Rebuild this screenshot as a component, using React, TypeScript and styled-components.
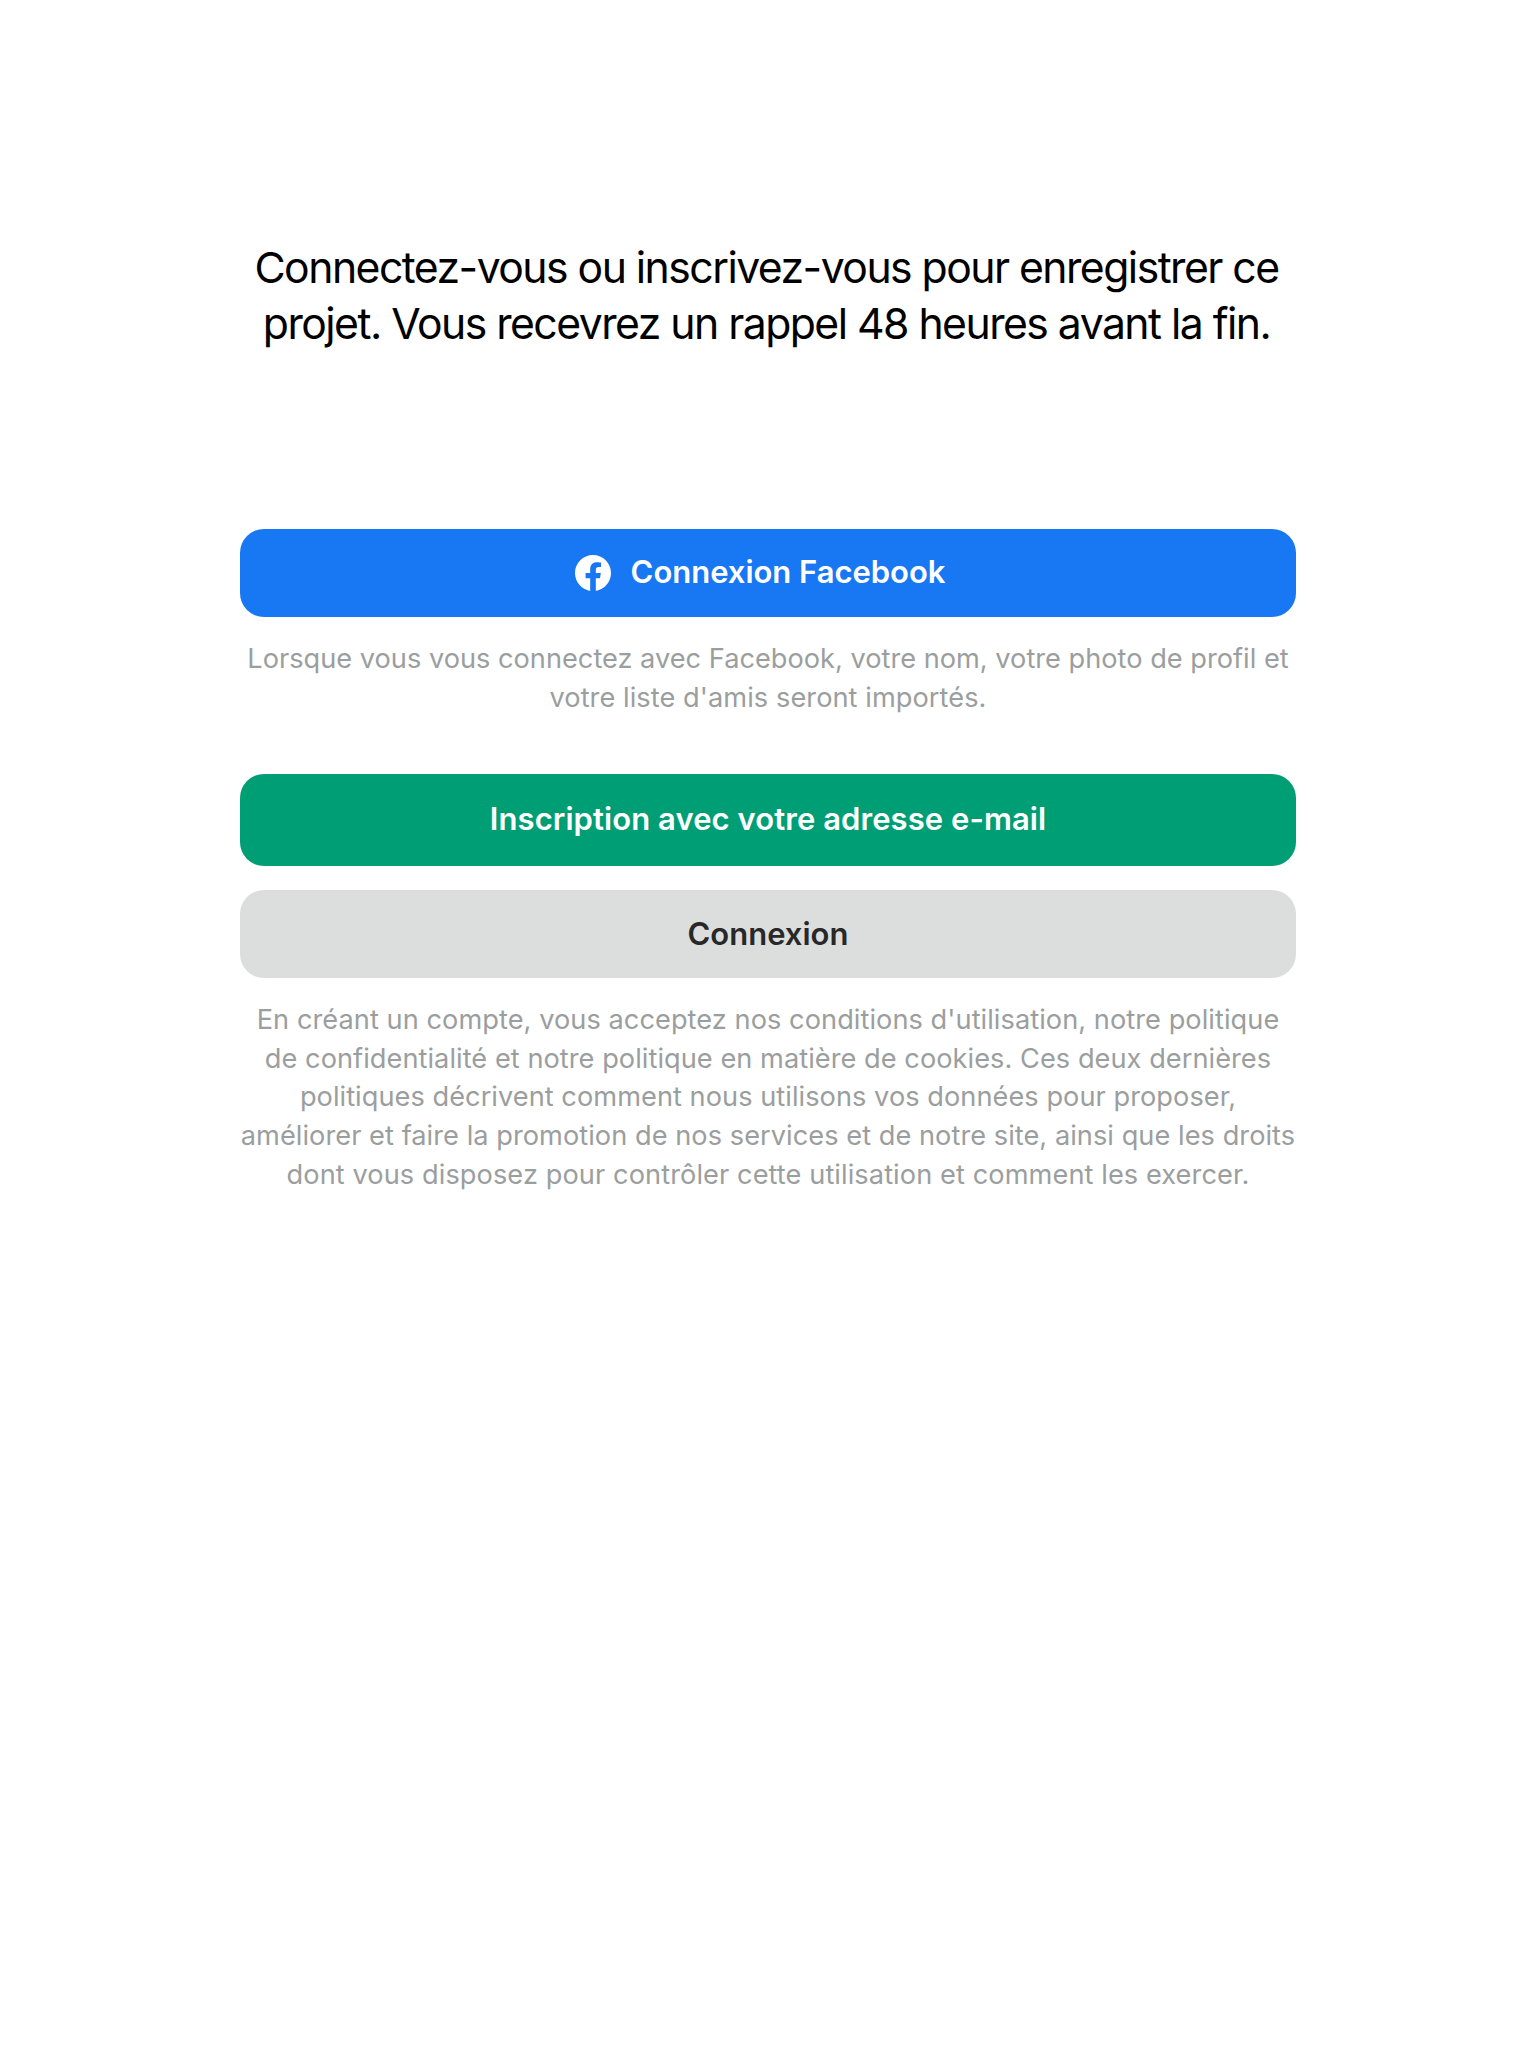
import React from 'react';
import styled, { createGlobalStyle } from 'styled-components';

const GlobalStyle = createGlobalStyle`
  body { margin: 0; background: #fff; }
  * { box-sizing: border-box; }
`;

const Screen = styled.main`
  display: flex;
  flex-direction: column;
  align-items: center;
  min-height: 2048px;
  padding-top: 240px;
  font-family: Inter, "Liberation Sans", sans-serif;
  text-align: center;
`;

const Line = styled.span<{ $spacing?: number }>`
  display: block;
  white-space: nowrap;
  letter-spacing: ${(p) => p.$spacing ?? 0}px;
`;

const Column = styled.div`
  display: flex;
  flex-direction: column;
  width: 1056px;
`;

const Title = styled.h1`
  margin: 0 0 177px;
  padding-right: 3px;
  font-size: 42.7px;
  line-height: 56px;
  font-weight: 400;
  color: #000;
`;

const Note = styled.p<{ $bottom?: number }>`
  margin: 23px 0 ${(p) => p.$bottom ?? 0}px;
  font-size: 27.2px;
  line-height: 38.7px;
  color: #9b9e9e;
`;

const Button = styled.button<{ $bg: string; $fg: string; $height: number }>`
  display: flex;
  align-items: center;
  justify-content: center;
  height: ${(p) => p.$height}px;
  padding: 0;
  border: 0;
  border-radius: 24px;
  background: ${(p) => p.$bg};
  color: ${(p) => p.$fg};
  font: 600 31px Inter, "Liberation Sans", sans-serif;
`;

const FacebookButton = styled(Button)`
  gap: 20px;
  padding-right: 16px;
`;

const Label = styled(Line)<{ $lift?: number }>`
  padding-bottom: ${(p) => (p.$lift ?? 0) * 2}px;
`;

const Actions = styled.div`
  display: flex;
  flex-direction: column;
  gap: 24px;
`;

const FacebookLogo = () => (
  <svg width="36" height="36" viewBox="0 0 24 24" fill="#fff" aria-hidden="true">
    <path d="M24 12.073c0-6.627-5.373-12-12-12s-12 5.373-12 12c0 5.99 4.388 10.954 10.125 11.854v-8.385H7.078v-3.47h3.047V9.43c0-3.007 1.792-4.669 4.533-4.669 1.312 0 2.686.235 2.686.235v2.953H15.83c-1.491 0-1.956.925-1.956 1.874v2.25h3.328l-.532 3.47h-2.796v8.385C19.612 23.027 24 18.062 24 12.073z" />
  </svg>
);

export default function App() {
  return (
    <Screen>
      <GlobalStyle />
      <Column>
        <Title>
          <Line $spacing={-1.53}>Connectez-vous ou inscrivez-vous pour enregistrer ce</Line>
          <Line $spacing={-1.53}>projet. Vous recevrez un rappel 48 heures avant la fin.</Line>
        </Title>
        <FacebookButton $bg="#1877f2" $fg="#fff" $height={88}>
          <FacebookLogo />
          <Label $lift={1.5} $spacing={-0.03}>Connexion Facebook</Label>
        </FacebookButton>
        <Note $bottom={56.6}>
          <Line>Lorsque vous vous connectez avec Facebook, votre nom, votre photo de profil et</Line>
          <Line $spacing={0.06}>votre liste d'amis seront importés.</Line>
        </Note>
        <Actions>
          <Button $bg="#009e74" $fg="#fff" $height={92}>
            <Label $spacing={0.07} $lift={1.5}>Inscription avec votre adresse e-mail</Label>
          </Button>
          <Button $bg="#dcdedd" $fg="#282828" $height={88}>
            <Label $lift={1}>Connexion</Label>
          </Button>
        </Actions>
        <Note>
          <Line $spacing={0.05}>En créant un compte, vous acceptez nos conditions d'utilisation, notre politique</Line>
          <Line $spacing={0.04}>de confidentialité et notre politique en matière de cookies. Ces deux dernières</Line>
          <Line $spacing={0.04}>politiques décrivent comment nous utilisons vos données pour proposer,</Line>
          <Line $spacing={0.04}>améliorer et faire la promotion de nos services et de notre site, ainsi que les droits</Line>
          <Line $spacing={0.08}>dont vous disposez pour contrôler cette utilisation et comment les exercer.</Line>
        </Note>
      </Column>
    </Screen>
  );
}
